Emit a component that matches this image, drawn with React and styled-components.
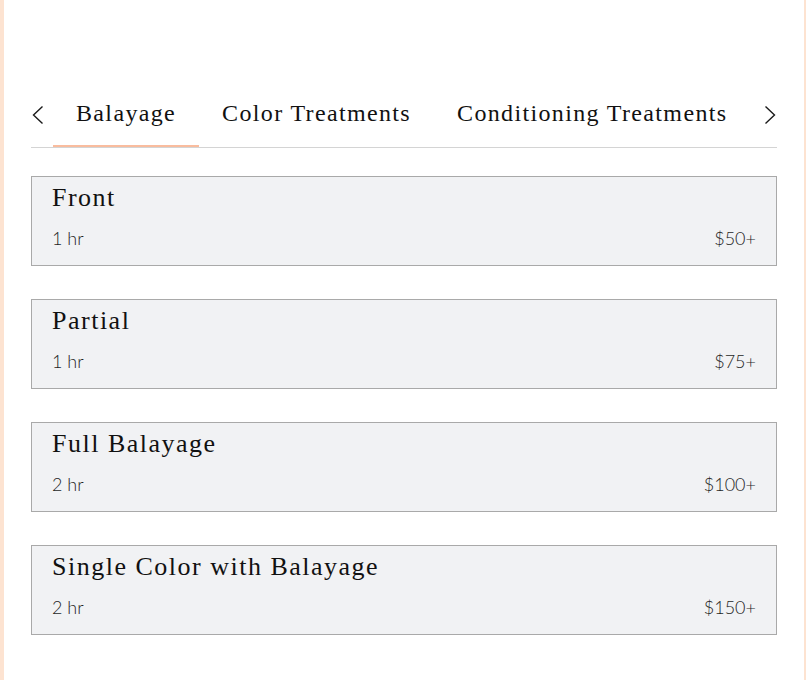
import { useState } from "react";
import styled, { createGlobalStyle } from "styled-components";

const GlobalStyle = createGlobalStyle`
  body {
    margin: 0;
    background: #fff;
  }
`;

const Page = styled.div`
  min-height: 680px;
  box-sizing: border-box;
  border-left: 4px solid #fde3d1;
  border-right: 2px solid #fde3d1;
  padding: 0 27px;
  background: #fff;
`;

const TabBar = styled.div`
  display: flex;
  align-items: flex-start;
  padding-top: 98px;
  border-bottom: 1px solid #d4d4d4;
`;

const Arrow = styled.button`
  display: flex;
  align-items: center;
  justify-content: ${(p) => (p.$right ? "flex-end" : "flex-start")};
  width: ${(p) => (p.$right ? "24px" : "22px")};
  height: 34px;
  padding: ${(p) => (p.$right ? "0 1px 0 0" : "0 0 0 1px")};
  border: 0;
  background: none;
  cursor: pointer;
  color: #1a1a1a;
`;

const TabList = styled.div`
  flex: 1;
  display: flex;
  overflow: hidden;
`;

const Tab = styled.div`
  padding: 0 23px 17px;
  margin-bottom: -1px;
  border-bottom: 3px solid ${(p) => (p.$active ? "#f9bc9e" : "transparent")};
  font-family: "Liberation Serif", "Times New Roman", serif;
  font-size: 24px;
  line-height: 30px;
  letter-spacing: 1.35px;
  color: #111;
  white-space: nowrap;
  cursor: pointer;
`;

const List = styled.div`
  display: flex;
  flex-direction: column;
  gap: 33px;
  margin-top: 28px;
`;

const Card = styled.div`
  height: 90px;
  box-sizing: border-box;
  padding: 6px 20px 0;
  border: 1px solid #a9a9a9;
  background: #f1f2f4;
`;

const Title = styled.div`
  font-family: "Liberation Serif", "Times New Roman", serif;
  font-size: 26px;
  line-height: 30px;
  letter-spacing: 1.5px;
  color: #111;
`;

const Meta = styled.div`
  display: flex;
  justify-content: space-between;
  margin-top: 13px;
  font-family: Lato, "Liberation Sans", sans-serif;
  font-weight: 300;
  font-size: 18px;
  line-height: 24px;
  color: #1f1f1f;
`;

const tabs = ["Balayage", "Color Treatments", "Conditioning Treatments"];

const services = [
  { name: "Front", time: "1 hr", price: "$50+" },
  { name: "Partial", time: "1 hr", price: "$75+" },
  { name: "Full Balayage", time: "2 hr", price: "$100+" },
  { name: "Single Color with Balayage", time: "2 hr", price: "$150+" },
];

function Chevron({ right }) {
  return (
    <svg width="12" height="20" viewBox="0 0 12 20" fill="none">
      <polyline
        points={right ? "1.5,1.5 10.5,10 1.5,18.5" : "10.5,1.5 1.5,10 10.5,18.5"}
        stroke="currentColor"
        strokeWidth="1.4"
      />
    </svg>
  );
}

export default function App() {
  const [active, setActive] = useState(0);
  return (
    <>
      <GlobalStyle />
      <Page>
        <TabBar>
          <Arrow aria-label="previous">
            <Chevron />
          </Arrow>
          <TabList>
            {tabs.map((t, i) => (
              <Tab key={t} $active={i === active} onClick={() => setActive(i)}>
                {t}
              </Tab>
            ))}
          </TabList>
          <Arrow $right aria-label="next">
            <Chevron right />
          </Arrow>
        </TabBar>
        <List>
          {services.map((s) => (
            <Card key={s.name}>
              <Title>{s.name}</Title>
              <Meta>
                <span>{s.time}</span>
                <span>{s.price}</span>
              </Meta>
            </Card>
          ))}
        </List>
      </Page>
    </>
  );
}
